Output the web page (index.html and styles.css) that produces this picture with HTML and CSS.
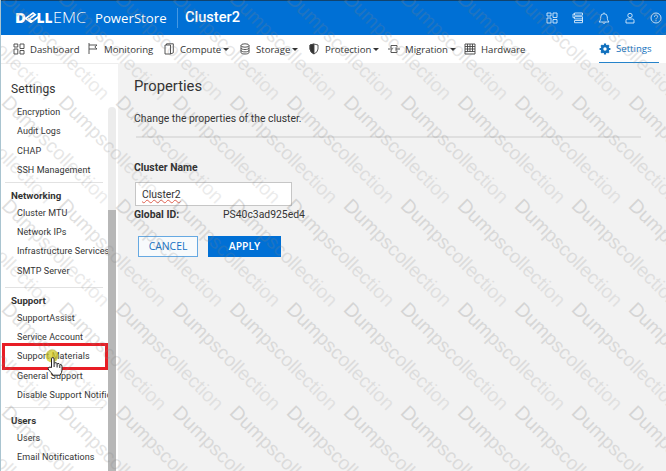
FILE: index.html
```
<!DOCTYPE html>
<html lang="en">

<head>
    <meta charset="UTF-8">
    <meta name="viewport" content="width=device-width, initial-scale=1.0">
    <title>PowerStore - Cluster2</title>
    <link rel="stylesheet" href="styles.css">
</head>

<body>
    <div class="app">
        <header class="topbar">
            <svg class="logo" width="72" height="16" viewBox="0 0 72 16">
                <text class="logo-dell" x="0" y="13" textLength="11" lengthAdjust="spacingAndGlyphs">D</text>
                <path fill="none" stroke="#fff" stroke-width="1.7" d="M16 12.200L10.500 8.500 18 3l2.200 1.700L14 9.300M16 12.200l7.500-5.500M16.500 11L13 8.500" />
                <text class="logo-dell" x="21.500" y="13" textLength="16" lengthAdjust="spacingAndGlyphs">LL</text>
                <text class="logo-emc" x="38" y="13" textLength="33" lengthAdjust="spacingAndGlyphs">EMC</text>
            </svg>
            <span class="product">PowerStore</span>
            <span class="cluster">Cluster2</span>
            <div class="tools">
                <svg width="12" height="12" viewBox="0 0 12 12">
                    <path d="M1 1h4v3H1zM7 1h4v4.500H7zM1 6h4v5H1zM7 7.500h4V11H7z" />
                </svg>
                <svg width="12" height="12" viewBox="0 0 12 12">
                    <path d="M2.500 1h8v2.200h-8zM2.500 4.700h8v2.200h-8zM2.500 8.500h8v2.200h-8zM2.500 2H1v3.700h1.500M10.500 5.800v3.700" />
                </svg>
                <svg width="12" height="13" viewBox="0 0 12 13">
                    <path d="M1 10c1.500-1.500 1.700-3 1.700-5a3.300 3.300 0 0 1 6.600 0c0 2 .2 3.500 1.700 5zM4.700 10.500a1.400 1.400 0 0 0 2.600 0M6 1.700V.5" />
                </svg>
                <svg width="12" height="12" viewBox="0 0 12 12">
                    <circle cx="6" cy="3.500" r="2.200" />
                    <path d="M2 11V8.500q0-1.500 1.500-1.500h5q1.500 0 1.500 1.500V11z" />
                </svg>
                <svg width="12" height="12" viewBox="0 0 12 12">
                    <circle cx="6" cy="6" r="5" />
                    <path d="M4.400 4.800C4.400 2.400 7.700 2.700 7.600 4.600 7.600 5.800 6 5.800 6 7.300M6 8.200v1.100" />
                </svg>
            </div>
        </header>

        <nav class="menu">
            <a class="menu-item dashboard">
                <svg width="12" height="12" viewBox="0 0 12 12"><path d="M1 1h3.800v3H1zM7 1h4v4.500H7zM1 6h3.800v5H1zM7 7.500h4V11H7z" /></svg>
                <span>Dashboard</span>
            </a>
            <a class="menu-item monitoring">
                <svg width="12" height="12" viewBox="0 0 12 12"><path d="M2 0v11M2 2h8L7.800 4 10 6H2" /></svg>
                <span>Monitoring</span>
            </a>
            <a class="menu-item compute">
                <svg width="12" height="12" viewBox="0 0 12 12"><path d="M2 2h5.500v9H2zM3.500 2V.8h6.800v9L7.500 11" /></svg>
                <span>Compute</span><i class="caret"></i>
            </a>
            <a class="menu-item storage">
                <svg width="12" height="12" viewBox="0 0 12 12"><ellipse cx="6" cy="2.500" rx="4" ry="1.700" /><path d="M2 2.500v7c0 2 8 2 8 0v-7M2 5c0 2 8 2 8 0M2 7.400c0 2 8 2 8 0" /></svg>
                <span>Storage</span><i class="caret"></i>
            </a>
            <a class="menu-item protection">
                <svg width="12" height="12" viewBox="0 0 12 12"><path d="M6 1l4 1v4q0 3-4 5-4-2-4-5V2z" /><path class="solid" d="M6 1v10Q2 9 2 6V2z" /></svg>
                <span>Protection</span><i class="caret"></i>
            </a>
            <a class="menu-item migration">
                <svg width="12" height="12" viewBox="0 0 12 12"><path d="M3 4.500V2.500h6v2M3 7.500v2h6v-2M0 6h4M2.700 4.200L4.500 6 2.700 7.800M8 6h4M8 4.300v3.400" /></svg>
                <span>Migration</span><i class="caret"></i>
            </a>
            <a class="menu-item hardware">
                <svg width="12" height="12" viewBox="0 0 12 12"><path d="M1 1h10v10H1zM1 8.500h10M3.500 1v7.500M6 1v7.500M8.500 1v7.500M1 3.500h10M1 6h10" /></svg>
                <span>Hardware</span>
            </a>
            <a class="menu-item settings active">
                <svg width="12" height="12" viewBox="0 0 12 12"><circle cx="6" cy="6" r="3" stroke-width="2.600" /><path stroke-width="2.200" d="M6 .6v2M6 9.400v2M.6 6h2M9.400 6h2M2.200 2.200l1.400 1.400M8.400 8.400l1.400 1.400M2.200 9.800l1.400-1.400M8.400 3.600l1.400-1.400" /></svg>
                <span>Settings</span>
            </a>
        </nav>

        <div class="body">
            <aside class="sidebar">
                <div class="list">
                    <h2>Settings</h2>
                    <ul>
                        <li><span>Encryption</span></li>
                        <li><span>Audit Logs</span></li>
                        <li><span>CHAP</span></li>
                        <li><span>SSH Management</span></li>
                    </ul>
                    <h3 class="networking">Networking</h3>
                    <ul>
                        <li><span>Cluster MTU</span></li>
                        <li><span>Network IPs</span></li>
                        <li><span>Infrastructure Services</span></li>
                        <li><span>SMTP Server</span></li>
                    </ul>
                    <h3 class="support">Support</h3>
                    <ul>
                        <li><span>SupportAssist</span></li>
                        <li><span>Service Account</span></li>
                        <li class="marked"><span>Support Materials</span>
                            <svg class="pointer" width="26" height="32" viewBox="0 0 26 32">
                                <circle cx="10" cy="8" r="6.500" fill="#d3cc22" opacity=".75" />
                                <path d="M9.500 19.500V11q0-1.500 1.300-1.500T12.100 11v4q2.400-1 3 .7 2.300-.7 2.700.8 2.200-.3 2.200 1.600v4q0 2.500-2 5.100h-7.200q-.8-2.400-3.600-4.600-1.900-2.100-.6-3.100 1.200-.8 2.900 0z" fill="#fff" stroke="#222" />
                                <path d="M12.100 15v4M15.100 16v3.500M17.800 17v3" fill="none" stroke="#222" />
                            </svg>
                        </li>
                        <li><span>General Support</span></li>
                        <li><span>Disable Support Notific</span></li>
                    </ul>
                    <h3 class="users">Users</h3>
                    <ul>
                        <li><span>Users</span></li>
                        <li><span>Email Notifications</span></li>
                    </ul>
                </div>
                <div class="scrollbar"><div class="thumb"></div></div>
            </aside>

            <main class="content">
                <h1>Properties</h1>
                <p class="intro">Change the properties of the cluster.</p>
                <hr>
                <label class="name-label">Cluster Name</label>
                <div class="name-input"><span>Cluster2</span></div>
                <div class="global-id">
                    <b>Global ID:</b>
                    <span>PS40c3ad925ed4</span>
                </div>
                <div class="buttons">
                    <div class="btn cancel">CANCEL</div>
                    <div class="btn apply">APPLY</div>
                </div>
            </main>
        </div>

        <svg class="watermark" width="666" height="471">
            <defs>
                <linearGradient id="fade">
                    <stop offset="0" stop-color="#808080" stop-opacity=".26" />
                    <stop offset="1" stop-color="#808080" stop-opacity=".15" />
                </linearGradient>
            </defs>
        </svg>
    </div>

    <script>
        // repeat the diagonal text over the whole page
        const watermark = document.querySelector('.watermark');
        for (let y = -103.2; y < 471; y += 103.35) {
            for (let x = -113.4; x < 666; x += 57) {
                const text = document.createElementNS('http://www.w3.org/2000/svg', 'text');
                text.textContent = 'Dumpscollection';
                text.setAttribute('textLength', 143);
                text.setAttribute('fill', 'url(#fade)');
                text.setAttribute('transform', `translate(${x} ${y}) rotate(45)`);
                watermark.appendChild(text);
            }
        }
    </script>
</body>

</html>
```
FILE: styles.css
```
* {
    box-sizing: border-box;
}

body {
    margin: 0;
    font-family: Roboto, sans-serif;
    color: #333;
}

h1,
h2,
h3,
p,
ul,
hr {
    margin: 0;
    padding: 0;
}

.app {
    position: relative;
    width: 666px;
    height: 471px;
    overflow: hidden;
    display: flex;
    flex-direction: column;
    border-left: 1px solid #a9c4d0;
    background: #fff;
}

/* header */
.topbar {
    height: 35px;
    flex: none;
    display: flex;
    align-items: center;
    background: #0070d5;
    border-top: 1px solid #10436f;
    color: #fff;
    padding-left: 14px;
}

.logo {
    flex: none;
}

.logo-dell,
.logo-emc {
    font-family: "Open Sans", sans-serif;
    font-size: 14.5px;
    fill: #fff;
}

.logo-dell {
    font-weight: 800;
}

.logo-emc {
    font-weight: 300;
}

.product {
    width: 82px;
    margin-left: 8px;
    font-family: "Open Sans", sans-serif;
    font-size: 13.2px;
    line-height: 18px;
}

.cluster {
    height: 20px;
    padding-left: 7px;
    border-left: 1px solid #4698e2;
    font-size: 14.6px;
    font-weight: 500;
    line-height: 18px;
}

.tools {
    display: flex;
    gap: 14px;
    margin-left: auto;
    padding-right: 4px;
    align-items: center;
}

.tools svg {
    fill: none;
    stroke: #d8ebfb;
    stroke-width: .9;
}

/* main menu */
.menu {
    height: 28px;
    flex: none;
    display: flex;
    padding-left: 12px;
    font-family: "Open Sans", sans-serif;
    font-size: 9.6px;
}

.menu-item {
    display: flex;
    align-items: center;
    flex: none;
}

.menu-item svg {
    fill: none;
    stroke: #444;
    stroke-width: .9;
    margin-right: 5px;
    flex: none;
}

.menu-item .solid {
    fill: #333;
}

.dashboard { width: 74px; }
.monitoring { width: 76px; }
.compute { width: 76px; }
.storage { width: 69px; }
.protection { width: 80px; }
.migration { width: 76px; }

.caret {
    border: 3px solid transparent;
    border-top-color: #333;
    border-bottom: 0;
    margin-left: 2px;
}

.active {
    margin-left: auto;
    margin-right: 7px;
    width: 60px;
    color: #1170bd;
    border-bottom: 1px solid #2583ca;
}

.menu-item.active svg {
    stroke: #1170bd;
}

/* left navigation */
.body {
    flex: 1;
    display: flex;
    min-height: 0;
}

.sidebar {
    width: 117px;
    flex: none;
    display: flex;
    border-top: 1px solid #eee;
}

.list {
    width: 107px;
    height: 407px;
}

.list h2 {
    height: 39px;
    padding: 16px 0 0 10px;
    font-size: 12px;
    font-weight: 400;
    line-height: 18px;
    letter-spacing: .1px;
}

.list h3 {
    margin-left: 4px;
    width: 98px;
    height: 21.6px;
    border-top: 1px solid #e2e2e2;
    padding-left: 6px;
    font-size: 9.7px;
    font-weight: 700;
    line-height: 26px;
}

h3.networking {
    margin-top: 1.4px;
}

h3.support {
    margin-top: 5.8px;
}

h3.users {
    margin-top: 2px;
}

.list ul {
    list-style: none;
}

.list li {
    height: 19.4px;
    padding-left: 16px;
    font-size: 9px;
    line-height: 19px;
    letter-spacing: .08px;
    white-space: nowrap;
}

.list li span {
    display: block;
}

.list .marked {
    position: relative;
}

.marked::before {
    content: "";
    box-sizing: border-box;
    position: absolute;
    left: 1px;
    top: -4px;
    width: 106px;
    height: 27px;
    border: 3px solid #e81d25;
}

.pointer {
    position: absolute;
    left: 41px;
    top: 1px;
}

.scrollbar {
    width: 8px;
    padding-top: 43px;
}

.thumb {
    height: 364px;
    border-top: 103px solid #ececec;
    background: #b7b7b7;
    border-radius: 4px 4px 0 0;
}

/* properties form */
.content {
    flex: 1;
    background: #f2f2f2;
    padding: 13px 25px 0 16px;
    font-size: 10.4px;
}

.content h1 {
    font-size: 14.8px;
    font-weight: 400;
    line-height: 20px;
}

.intro {
    margin-top: 14px;
    line-height: 18px;
}

.content hr {
    border: 0;
    height: 2px;
    margin: 8px 0 23px 2px;
    background: #dfdfdf;
}

.name-label {
    display: block;
    font-weight: 700;
    line-height: 14px;
}

.name-input {
    width: 157px;
    height: 24px;
    margin: 7px 0 0 1px;
    padding-left: 6px;
    border: 1px solid #c6c6c6;
    background: #fff;
    line-height: 23px;
}

.name-input span {
    text-decoration: underline wavy #e0604f .7px;
    text-underline-offset: 1px;
}

.global-id {
    display: flex;
    height: 16px;
    line-height: 18px;
}

.global-id b {
    width: 89px;
}

.buttons {
    display: flex;
    gap: 10px;
    margin: 14px 0 0 4px;
    font-family: "Open Sans", sans-serif;
}

.btn {
    height: 21px;
    line-height: 19px;
    border: 1px solid #0070d5;
    text-align: center;
}

.cancel {
    width: 60px;
    border-color: #66a9e2;
    background: #f7fafc;
    color: #1170c4;
}

.apply {
    width: 73px;
    background: #0070d5;
    color: #fff;
    font-weight: 600;
}

.watermark {
    position: absolute;
    left: -1px;
    top: 0;
    pointer-events: none;
    font: 19.5px "Liberation Sans", sans-serif;
}
```
